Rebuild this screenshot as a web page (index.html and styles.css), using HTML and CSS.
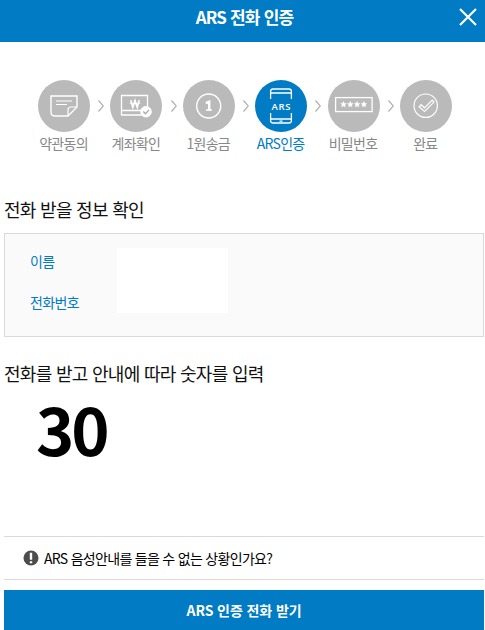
FILE: index.html
```html
<!DOCTYPE html>
<html lang="ko">
<head>
  <meta charset="UTF-8" />
  <meta name="viewport" content="width=device-width, initial-scale=1.0" />
  <title>ARS 전화 인증</title>
  <link rel="stylesheet" href="styles.css">
</head>
<body>
  <header class="header">
    <h1>ARS 전화 인증</h1>
    <button class="close" aria-label="닫기">
      <svg width="18" height="18" viewBox="0 0 18 18"><path d="M1 1l16 16M17 1L1 17" stroke="#fff" stroke-width="2.2" fill="none"/></svg>
    </button>
  </header>

  <ol class="steps">
    <li class="step">
      <svg class="icon" viewBox="0 0 52 52">
        <path d="M13 16h26v11l-9 9H17q-4 0-4-4z" stroke-width="1.4"/>
        <path d="M30 36v-6q0-3 3-3h6M18 21h16M18 24.500h11" stroke-width="1.200"/>
      </svg>
      <span>약관동의</span>
    </li>
    <li class="arrow"><svg width="6" height="12" viewBox="0 0 6 12"><path d="M.5.5L5.300 6 .5 11.500"/></svg></li>
    <li class="step">
      <svg class="icon" viewBox="0 0 52 52">
        <path d="M35 35H11.500V15.500h26V28M12 30.500h20" stroke-width="1.300"/>
        <path d="M20.800 20.200l2 7 2.200-6.500 2.200 6.500 2-7" stroke-width="1.700"/>
        <path d="M19.500 23.500h11" stroke-width="0.600"/>
        <circle class="fill" cx="36" cy="31.700" r="5.300"/>
        <path class="tick" d="M33.300 31.500l2.200 2.200 3.500-3.800" stroke-width="1.300"/>
      </svg>
      <span>계좌확인</span>
    </li>
    <li class="arrow"><svg width="6" height="12" viewBox="0 0 6 12"><path d="M.5.5L5.300 6 .5 11.500"/></svg></li>
    <li class="step">
      <svg class="icon" viewBox="0 0 52 52">
        <circle cx="25.700" cy="26" r="12" stroke-width="1.400"/>
        <path d="M22.800 23.200l3.400-1.400V30.500" stroke-width="2.400"/>
        <path d="M23 30h6" stroke-width="1.600"/>
      </svg>
      <span>1원송금</span>
    </li>
    <li class="arrow"><svg width="6" height="12" viewBox="0 0 6 12"><path d="M.5.5L5.300 6 .5 11.500"/></svg></li>
    <li class="step on">
      <svg class="icon" viewBox="0 0 52 52">
        <path d="M15.600 19v-7.500q0-2.500 2.500-2.500h15.800q2.500 0 2.500 2.500V19M15.600 13h20.800M15.600 33v7.500q0 2.500 2.500 2.500h15.800q2.500 0 2.500-2.500V33M15.600 39h20.800M24.500 41.200h3" stroke-width="1.300"/>
        <text x="26.300" y="29.500">ARS</text>
      </svg>
      <span>ARS인증</span>
    </li>
    <li class="arrow"><svg width="6" height="12" viewBox="0 0 6 12"><path d="M.5.5L5.300 6 .5 11.500"/></svg></li>
    <li class="step">
      <svg class="icon" viewBox="0 0 52 52">
        <rect x="7.600" y="17.600" width="36.500" height="14" stroke-width="1.300"/>
        <g class="stars">
          <path id="star" d="M15.500 21.300l.9 1.900 2.100.2-1.600 1.500.5 2.200-1.900-1.100-1.900 1.100.5-2.200-1.600-1.500 2.100-.2z"/>
          <use href="#star" x="6.800"/>
          <use href="#star" x="13.600"/>
          <use href="#star" x="20.400"/>
        </g>
      </svg>
      <span>비밀번호</span>
    </li>
    <li class="arrow"><svg width="6" height="12" viewBox="0 0 6 12"><path d="M.5.5L5.300 6 .5 11.500"/></svg></li>
    <li class="step">
      <svg class="icon" viewBox="0 0 52 52">
        <circle cx="25.700" cy="25.700" r="11.700" stroke-width="1.200"/>
        <path d="M19 26.800l2.100-2.100 3.400 3.200 7.700-7.800 1.800 2-9.400 9.400z" stroke-width="1.200"/>
      </svg>
      <span>완료</span>
    </li>
  </ol>

  <main class="content">
    <h2>전화 받을 정보 확인</h2>
    <div class="info">
      <dl>
        <dt>이름</dt>
        <dt>전화번호</dt>
      </dl>
      <div class="blank"></div>
    </div>

    <h2 class="guide">전화를 받고 안내에 따라 숫자를 입력</h2>
    <p class="number">30</p>

    <a class="help">
      <svg width="16" height="16" viewBox="0 0 16 16"><circle cx="8" cy="8" r="7.500" fill="#4c4c4c"/><path d="M6.800 2.800h2.400v7H6.800zM6.800 11.200h2.400v2H6.800z" fill="#fff"/></svg>
      <span>ARS 음성안내를 들을 수 없는 상황인가요?</span>
    </a>
    <button class="submit">ARS 인증 전화 받기</button>
  </main>
</body>
</html>
```
FILE: styles.css
```css
* {
  box-sizing: border-box;
}

body {
  margin: 0;
  height: 630px;
  overflow: hidden;
  background: #fff;
  color: #111;
  font-family: "Noto Sans CJK KR", sans-serif;
}

h1, h2, p, dl, ol {
  margin: 0;
  padding: 0;
}

button {
  border: 0;
  font-family: inherit;
  color: #fff;
  background: #007bc4;
}

svg {
  display: block;
}

.header {
  display: flex;
  align-items: center;
  height: 42px;
  padding: 0 8px 8px 30px;
  background: #007bc4;
}

.header h1 {
  flex: 1;
  color: #fff;
  font-size: 17px;
  line-height: 34px;
  font-weight: 700;
  letter-spacing: -0.8px;
  text-align: center;
}

.close {
  padding: 0;
}

.steps {
  display: flex;
  justify-content: space-between;
  margin: 38px 33px 0 38px;
  list-style: none;
}

.step {
  width: 52px;
  color: #888;
  font-size: 14px;
  line-height: 20px;
  letter-spacing: -0.7px;
  text-align: center;
  white-space: nowrap;
}

.step span {
  display: block;
  margin: 1px 1px 1px 0;
}

.icon {
  width: 52px;
  height: 52px;
  border-radius: 50%;
  background: #bababa;
  fill: none;
  stroke: #fff;
}

.icon .fill {
  fill: #fff;
}

.icon .stars {
  fill: #fff;
  stroke: #fff;
  stroke-width: 0.3;
}

.icon .tick {
  stroke: #aaa;
}

.icon text {
  fill: #fff;
  stroke: none;
  font: 600 9.5px "Open Sans", sans-serif;
  letter-spacing: 0.7px;
  text-anchor: middle;
}

.on {
  color: #007bc4;
}

.on .icon {
  background: #007bc4;
}

.arrow {
  margin: 20px -1px 0 1px;
}

.arrow svg {
  fill: none;
  stroke: #b0b0b0;
  stroke-width: 1.2;
}

.content {
  padding: 42px 1px 0 4px;
}

h2 {
  font-size: 18px;
  line-height: 26px;
  font-weight: 400;
  letter-spacing: -0.7px;
}

.info {
  display: flex;
  height: 104px;
  margin-top: 11px;
  padding: 14px 25px;
  border: 1px solid #dadada;
  background: #fafafa;
}

.info dl {
  width: 87px;
}

.info dt {
  height: 41px;
  color: #007bc4;
  font-size: 14px;
  line-height: 26px;
  letter-spacing: -0.65px;
}

.blank {
  width: 111px;
  height: 65px;
  background: #fff;
}

.guide {
  margin-top: 23px;
}

.number {
  height: 150px;
  padding-left: 32px;
  color: #000;
  font-size: 65px;
  line-height: 85px;
  font-weight: 700;
  letter-spacing: -3px;
}

.help {
  display: flex;
  align-items: center;
  gap: 4px;
  height: 44px;
  padding-left: 19px;
  border-top: 1px solid #dadada;
  border-bottom: 1px solid #dadada;
  color: #000;
  font-size: 14px;
  letter-spacing: -0.7px;
}

.help span {
  padding-left: 1px;
}

.submit {
  display: block;
  width: 100%;
  height: 40px;
  margin-top: 10px;
  padding: 0;
  font-size: 14px;
  font-weight: 700;
  letter-spacing: -0.1px;
}
```
